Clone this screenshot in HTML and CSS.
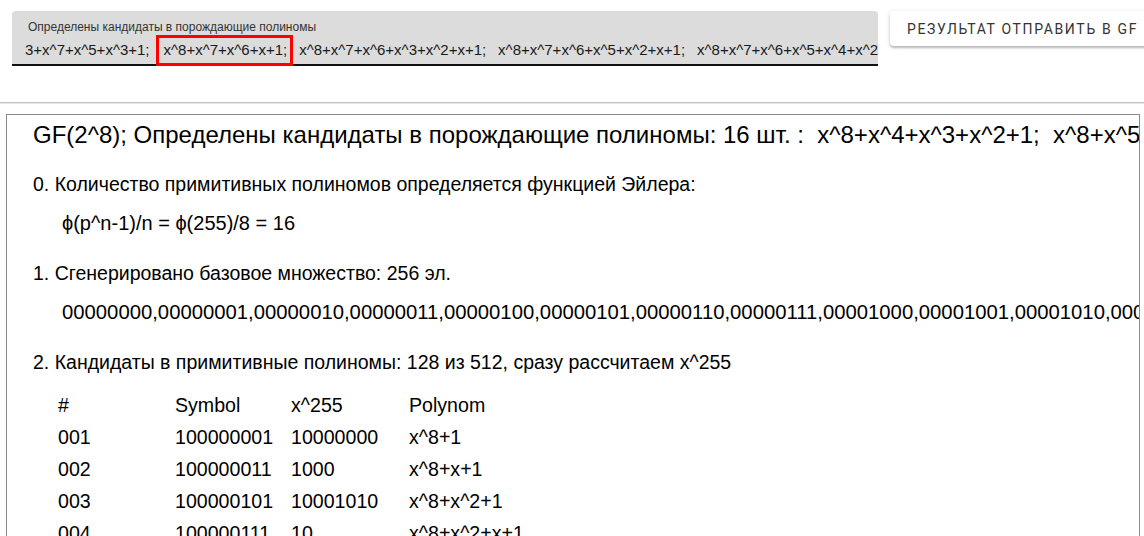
FILE: index.html
```html
<!DOCTYPE html>
<html lang="ru">
<head>
  <meta charset="UTF-8" />
  <title>GF(2^8) — порождающие полиномы</title>
  <link rel="stylesheet" href="styles.css">
</head>
<body>
  <div class="toolbar">
    <div class="field">
      <label class="field-label">Определены кандидаты в порождающие полиномы</label>
      <div class="field-value"><span class="scroll">3+x^7+x^5+x^3+1; <span class="picked">x^8+x^7+x^6+x+1;</span> x^8+x^7+x^6+x^3+x^2+x+1;  x^8+x^7+x^6+x^5+x^2+x+1;  x^8+x^7+x^6+x^5+x^4+x^2+1;</span></div>
    </div>
    <button class="send-btn">Результат отправить в GF</button>
  </div>

  <div class="divider"></div>

  <div class="output">
    <div class="title">GF(2^8); Определены кандидаты в порождающие полиномы: 16 шт. :&nbsp; x^8+x^4+x^3+x^2+1;&nbsp; x^8+x^5+x^3+x+1;&nbsp; x^8+x^5+x^3+x^2+1;</div>

    <div class="step">0. Количество примитивных полиномов определяется функцией Эйлера:</div>
    <div class="detail">ϕ(p^n-1)/n = ϕ(255)/8 = 16</div>

    <div class="step gap">1. Сгенерировано базовое множество: 256 эл.</div>
    <div class="detail bits">00000000,00000001,00000010,00000011,00000100,00000101,00000110,00000111,00001000,00001001,00001010,00001011,00001100</div>

    <div class="step gap">2. Кандидаты в примитивные полиномы: 128 из 512, сразу рассчитаем x^255</div>
    <div class="table">
      <div class="row">
        <span>#</span><span>Symbol</span><span>x^255</span><span>Polynom</span>
      </div>
      <div class="row">
        <span>001</span><span>100000001</span><span>10000000</span><span>x^8+1</span>
      </div>
      <div class="row">
        <span>002</span><span>100000011</span><span>1000</span><span>x^8+x+1</span>
      </div>
      <div class="row">
        <span>003</span><span>100000101</span><span>10001010</span><span>x^8+x^2+1</span>
      </div>
      <div class="row">
        <span>004</span><span>100000111</span><span>10</span><span>x^8+x^2+x+1</span>
      </div>
      <div class="row">
        <span>005</span><span>100001001</span><span>1001</span><span>x^8+x^3+1</span>
      </div>
    </div>
  </div>
</body>
</html>
```

FILE: styles.css
```css
* {
  box-sizing: border-box;
}

html, body {
  height: 100%;
}

body {
  margin: 0;
  font-family: 'Liberation Sans', Arial, sans-serif;
  color: #000;
  background: #fff;
  overflow: hidden;
}

/* top bar */
.toolbar {
  display: flex;
  align-items: flex-start;
  gap: 12px;
  padding: 11px 0 0 12px;
}

.field {
  flex: 0 0 866px;
  height: 55px;
  padding: 9px 0 0 16px;
  background: #dcdcdc;
  border-radius: 4px 4px 0 0;
  box-shadow: inset 0 -2px 0 #111;
  overflow: hidden;
}

.field-label {
  display: block;
  font-size: 12px;
  line-height: 14px;
  color: #333;
}

.field-value {
  margin-top: 1px;
  white-space: pre;
  font-size: 15px;
  line-height: 24px;
  word-spacing: 1.8px;
  color: #1a1a1a;
}

.scroll {
  margin-left: -3px;
}

.picked {
  display: inline-block;
  padding: 0 3px 1px 5px;
  border: 3px solid #f00;
  line-height: 24px;
}

.send-btn {
  flex: 0 0 auto;
  height: 35px;
  padding: 0 17px;
  border: none;
  border-radius: 4px;
  background: #fff;
  box-shadow: 0 2px 2px rgba(0, 0, 0, 0.2), 0 1px 5px rgba(0, 0, 0, 0.14);
  font-family: Roboto, 'Liberation Sans', sans-serif;
  font-size: 14px;
  letter-spacing: 1.65px;
  text-transform: uppercase;
  color: #333;
  white-space: nowrap;
}

.divider {
  margin-top: 36px;
  height: 2px;
  background: #c4c4c4;
  border-bottom: 1px solid #e6e6e6;
}

/* output panel */
.output {
  margin: 10px 0 0 6px;
  width: 1134px;
  height: 600px;
  padding: 8px 0 0 26px;
  border: 1px solid #8a8a8a;
  overflow: hidden;
  white-space: nowrap;
}

.title {
  font-size: 24px;
  line-height: 24px;
}

.step {
  margin-top: 27px;
  font-size: 19.5px;
  line-height: 20px;
}

.step.gap {
  margin-top: 30px;
}

.detail {
  margin: 19px 0 0 29px;
  font-size: 20px;
  line-height: 20px;
}

.bits {
  font-size: 20.3px;
}

.table {
  margin: 17px 0 0 25px;
  font-size: 19.6px;
}

.row {
  display: grid;
  grid-template-columns: 117px 116px 118px auto;
  line-height: 32px;
}
```
